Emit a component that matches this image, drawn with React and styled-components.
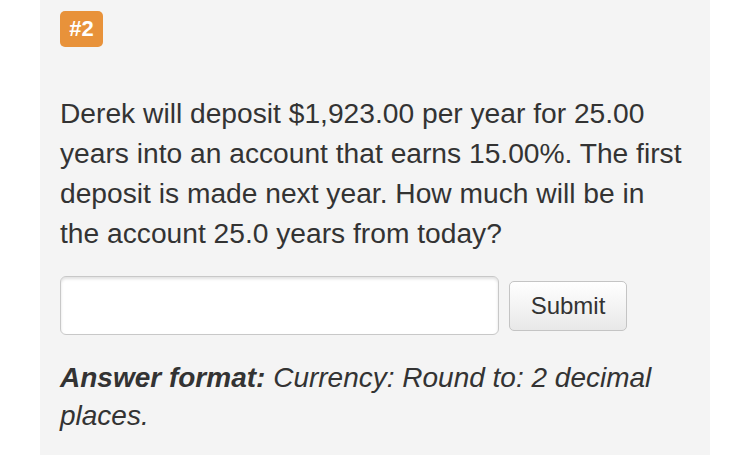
import React from "react";
import styled, { createGlobalStyle } from "styled-components";

const Global = createGlobalStyle`
	html, body {
		margin: 0;
		padding: 0;
		background: #ffffff;
	}
	body {
		font-family: "Liberation Sans", Arial, sans-serif;
		color: #333333;
	}
`;

const App = () => {
	return (
		<Page>
			<Global />
			<Panel>
				<Badge>#2</Badge>
				<Question>
					Derek will deposit $1,923.00 per year for 25.00 years into an account
					that earns 15.00%. The first deposit is made next year. How much will
					be in the account 25.0 years from today?
				</Question>
				<AnswerRow>
					<Input type="text" />
					<Button>Submit</Button>
				</AnswerRow>
				<Format>
					<b>Answer format:</b> Currency: Round to: 2 decimal places.
				</Format>
			</Panel>
		</Page>
	);
};

export default App;

const Page = styled.div`
	width: 746px;
	height: 455px;
	overflow: hidden;
	padding-left: 40px;
	box-sizing: border-box;
`;

const Panel = styled.div`
	width: 670px;
	height: 455px;
	background-color: #f4f4f4;
	padding: 11px 24px 0 20px;
	box-sizing: border-box;
`;

const Badge = styled.div`
	display: inline-flex;
	align-items: center;
	justify-content: center;
	width: 43px;
	height: 36px;
	border-radius: 5px;
	background-color: #e8923a;
	color: #ffffff;
	font-weight: bold;
	font-size: 22px;
`;

const Question = styled.p`
	margin: 46px 0 0 0;
	font-size: 28.2px;
	line-height: 40px;
	color: #333333;
`;

const AnswerRow = styled.div`
	display: flex;
	align-items: center;
	gap: 10px;
	margin-top: 23px;
`;

const Input = styled.input`
	width: 439px;
	height: 59px;
	box-sizing: border-box;
	border: 1px solid #c8c8c8;
	border-radius: 6px;
	background: #ffffff;
	box-shadow: inset 0 2px 3px rgba(0, 0, 0, 0.12);
	outline: none;
`;

const Button = styled.button`
	width: 118px;
	height: 50px;
	box-sizing: border-box;
	border: 1px solid #c4c4c4;
	border-radius: 5px;
	background: linear-gradient(#ffffff, #e8e8e8);
	font-family: "Liberation Sans", Arial, sans-serif;
	font-size: 24px;
	color: #333333;
	padding: 0;
`;

const Format = styled.p`
	margin: 24px 0 0 0;
	font-size: 28px;
	line-height: 38px;
	font-style: italic;
	color: #333333;

	b {
		font-weight: bold;
	}
`;
